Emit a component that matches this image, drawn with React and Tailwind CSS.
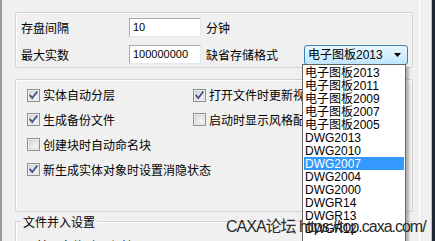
const cjk = { fontFamily: '"Noto Sans CJK SC", "Liberation Sans", sans-serif' };
const latin = { fontFamily: '"Liberation Sans", "Noto Sans CJK SC", sans-serif' };

function Check({ on }) {
  return (
    <svg width="13" height="13" viewBox="0 0 13 13" className="shrink-0">
      <defs>
        <linearGradient id="cbg" x1="0" y1="0" x2="1" y2="1">
          <stop offset="0" stopColor="#d6d6d6" />
          <stop offset="1" stopColor="#fbfbfb" />
        </linearGradient>
      </defs>
      <rect x="0.5" y="0.5" width="12" height="12" fill="#fff" stroke="#8e8f8f" />
      <rect x="2" y="2" width="9" height="9" fill="url(#cbg)" stroke="#c4c4c4" strokeWidth="0.6" />
      {on && (
        <path d="M3.2 6.6 L5.3 9 L9.8 3.2" fill="none" stroke="#3f5490" strokeWidth="1.8" strokeLinecap="square" />
      )}
    </svg>
  );
}

function Box({ label, on, w }) {
  return (
    <div className={`flex items-center gap-[3px] ${w}`}>
      <Check on={on} />
      <span className="text-[12px] leading-none whitespace-nowrap text-black" style={cjk}>{label}</span>
    </div>
  );
}

const items = [
  "电子图板2013", "电子图板2011", "电子图板2009", "电子图板2007", "电子图板2005",
  "DWG2013", "DWG2010", "DWG2007", "DWG2004", "DWG2000", "DWGR14", "DWGR13", "DWGR12",
];

export default function App() {
  return (
    <div className="relative w-[435px] h-[241px] overflow-hidden bg-[#f0f0f0] flex">
      <div className="w-[2px] shrink-0 bg-[#9c9c9c]" />
      <div className="w-[417px] shrink-0 pl-[13px] pr-[6px] pt-[12px]">
        {/* group 1 */}
        <div className="h-[56px] border border-[#d2d2d2] rounded-[2px] shadow-[inset_1px_1px_0_#fff] pl-[5px] pt-[5px] flex flex-col gap-[8px]">
          <div className="flex items-center h-[19px]">
            <span className="w-[108px] text-[12px] leading-none" style={cjk}>存盘间隔</span>
            <div className="w-[72px] h-[19px] bg-white border border-[#e3e9ef] border-t-[#abadb3] border-l-[#abadb3] flex items-center pl-[3px] text-[11px]" style={latin}>10</div>
            <span className="ml-[5px] text-[12px] leading-none" style={cjk}>分钟</span>
          </div>
          <div className="flex items-center h-[19px]">
            <span className="w-[108px] text-[12px] leading-none" style={cjk}>最大实数</span>
            <div className="w-[72px] h-[19px] bg-white border border-[#e3e9ef] border-t-[#abadb3] border-l-[#abadb3] flex items-center pl-[3px] text-[11px]" style={latin}>100000000</div>
            <span className="ml-[5px] w-[98px] text-[12px] leading-none" style={cjk}>缺省存储格式</span>
            <div className="w-[104px] h-[20px] rounded-[3px] border border-[#3c7fb1] bg-gradient-to-b from-[#eaf6fd] to-[#bee6fd] flex items-center pl-[3px] pr-[6px]">
              <span className="flex-1 text-[12px] leading-none" style={latin}>电子图板2013</span>
              <svg width="7" height="4" viewBox="0 0 7 4"><path d="M0 0 H7 L3.5 4 Z" fill="#000" /></svg>
            </div>
          </div>
        </div>

        {/* group 2 */}
        <div className="mt-[11px] h-[133px] border border-[#d2d2d2] rounded-[2px] shadow-[inset_1px_1px_0_#fff] pl-[11px] pt-[3px] flex flex-col">
          <div className="h-[24px] flex items-center">
            <Box label="实体自动分层" on w="w-[166px]" />
            <Box label="打开文件时更新视图" on />
          </div>
          <div className="h-[25px] flex items-center">
            <Box label="生成备份文件" on w="w-[166px]" />
            <Box label="启动时显示风格配置" />
          </div>
          <div className="h-[25px] flex items-center">
            <Box label="创建块时自动命名块" />
          </div>
          <div className="h-[25px] flex items-center">
            <Box label="新生成实体对象时设置消隐状态" on />
          </div>
        </div>

        {/* group 3 */}
        <div className="mt-[9px] border-l border-t border-[#d2d2d2] rounded-tl-[2px] shadow-[inset_1px_1px_0_#fff]">
          <div className="-mt-[8px] ml-[5px] w-fit px-[2px] bg-[#f0f0f0] text-[12px] leading-[16px]" style={cjk}>文件并入设置</div>
          <div className="mt-[9px] pl-[20px] text-[12px] leading-[14px]" style={cjk}>并入文件时 &nbsp;&nbsp;&nbsp; 保持原</div>
        </div>
      </div>
      <div className="w-[12px] shrink-0 border-l border-white" />
      <div className="w-[1px] shrink-0 bg-[#a9c8e3]" />
      <div className="flex-1 bg-[#1c2733]" />

      {/* dropdown list */}
      <div className="absolute left-[302px] top-[64px] w-[104px] h-[190px] bg-white border border-[#646464] shadow-[3px_3px_2px_rgba(0,0,0,0.25)] pt-[1px] px-[1px]">
        {items.map((t, i) => (
          <div
            key={t}
            className={`h-[13px] pl-[1px] flex items-center text-[12px] leading-none whitespace-nowrap ${i === 7 ? "bg-[#3399ff] text-white" : "text-black"}`}
            style={latin}
          >
            {t}
          </div>
        ))}
      </div>

      {/* watermark */}
      <div className="absolute left-[226px] top-[219px] text-[16px] leading-none tracking-[-1px] text-[#2a2a2a] whitespace-nowrap" style={latin}>
        CAXA论坛 https://top.caxa.com/
      </div>
    </div>
  );
}
